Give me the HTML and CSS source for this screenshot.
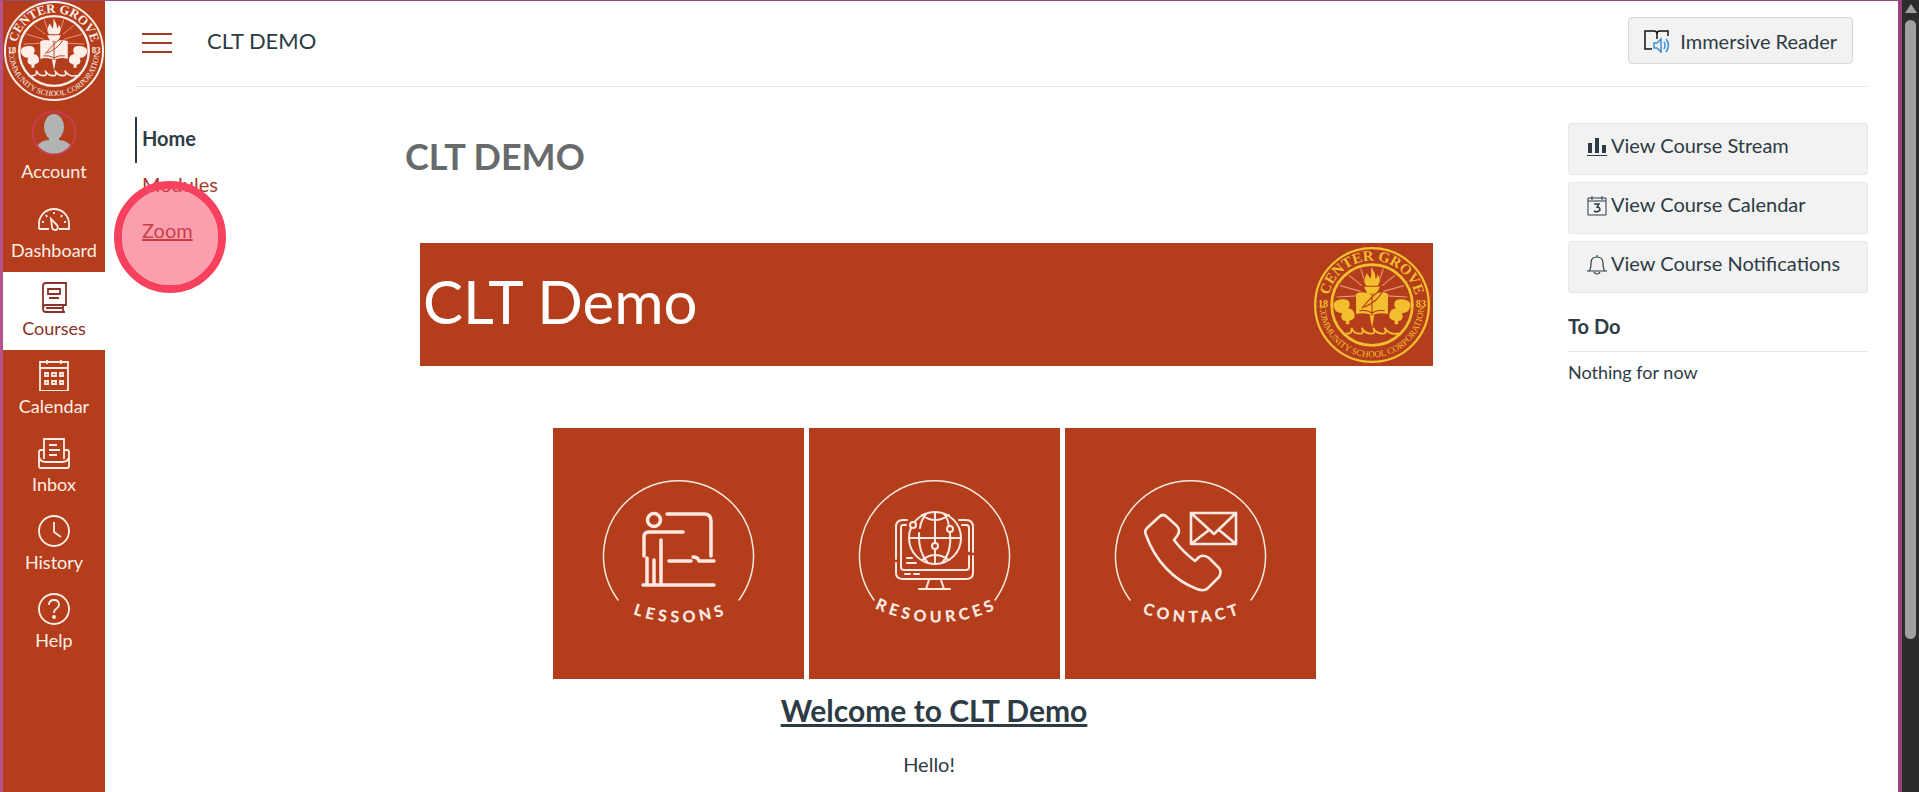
FILE: index.html
```html
<!DOCTYPE html>
<html lang="en">
<head>
    <meta charset="UTF-8">
    <meta name="viewport" content="width=device-width, initial-scale=1.0">
    <title>CLT DEMO</title>
    <link rel="stylesheet" href="styles.css">
</head>
<body>
    <!-- Shared school seal -->
    <svg class="defs" width="0" height="0" aria-hidden="true">
        <symbol id="seal" viewBox="0 0 102 102" overflow="visible">
            <path id="sealTop" d="M12 51 A39 39 0 0 1 90 51" fill="none"/>
            <path id="sealBottom" d="M5 51 A46 46 0 0 0 97 51" fill="none"/>
            <circle cx="51" cy="51" r="50" fill="none" stroke="currentColor" stroke-width="2"/>
            <circle cx="51" cy="51" r="35.5" fill="none" stroke="currentColor" stroke-width="2.4"/>
            <text class="seal-name" text-anchor="middle"><textPath href="#sealTop" startOffset="50%">CENTER GROVE</textPath></text>
            <text class="seal-corp" text-anchor="middle"><textPath href="#sealBottom" startOffset="50%">COMMUNITY SCHOOL CORPORATION</textPath></text>
            <text class="seal-year" x="8" y="53" text-anchor="middle">18</text>
            <text class="seal-year" x="94" y="53" text-anchor="middle">83</text>
            <g class="seal-rays" fill="none">
                <path d="M51 18 V26 M41 19 L44 28 M61 19 L58 28 M31 25 L42 34 M71 25 L60 34 M23 34 L41 39 M79 34 L61 39 M20 44 L38 43 M82 44 L64 43"/>
            </g>
            <path fill="currentColor" d="M46 34 C42 29 46 27 46 23 C48 25 49 26 49 28 C51 26 51 22 50 19 C54 22 54 25 54 28 C55 27 56 26 56 24 C59 29 58 31 56 34 Z"/>
            <path fill="currentColor" d="M44 35 H58 L55 41 H47 Z"/>
            <path fill="currentColor" d="M37 41 Q44 38 51 42 Q58 38 65 41 V59 Q58 57 51 60 Q44 57 37 59 Z"/>
            <path fill="currentColor" d="M49 60 H53 L51 71 Z"/>
            <path class="seal-cut" fill="none" d="M51 42 V60 M40 56 Q46 55 51 58 Q56 55 62 56 M42 54 C46 49 52 42 60 37 C60 43 53 49 44 53"/>
            <g fill="currentColor">
                <path d="M18 54 C15 50 19 46 25 46 C31 45 33 50 30 54 C35 54 37 60 35 63 L31 65 V68 H28 V65 C24 65 23 61 25 58 C22 58 19 57 18 54 Z"/>
                <path d="M84 54 C87 50 83 46 77 46 C71 45 69 50 72 54 C67 54 65 60 67 63 L71 65 V68 H74 V65 C78 65 79 61 77 58 C80 58 83 57 84 54 Z"/>
            </g>
            <path fill="none" stroke="currentColor" stroke-width="1.6" d="M28 76 Q34 77 33 71 Q35 77 42 76 Q44 75 42 71 Q45 77 52 76 Q54 75 52 71 Q55 77 62 76 Q64 75 62 71 Q66 78 75 76"/>
        </symbol>
    </svg>

    <div class="window">
        <div class="app">
            <nav class="global-nav" aria-label="Global navigation">
                <a class="logo" href="#" aria-label="Center Grove"><svg viewBox="0 0 102 102"><use href="#seal"/></svg></a>
                <a class="nav-item account" href="#">
                    <svg class="avatar" viewBox="0 0 46 46">
                        <clipPath id="avatarClip"><circle cx="23" cy="23" r="21"/></clipPath>
                        <g clip-path="url(#avatarClip)" fill="#b2b4b3">
                            <ellipse cx="23" cy="17" rx="10" ry="13"/>
                            <path d="M18 26 H28 V30 C38 31 42 36 42 46 H4 C4 36 8 31 18 30 Z"/>
                        </g>
                        <circle cx="23" cy="23" r="21.5" fill="none" stroke="#cb3b54" stroke-width="2"/>
                    </svg>
                    <span>Account</span>
                </a>
                <a class="nav-item" href="#">
                    <svg viewBox="0 0 32 32"><path d="M1 26 V21 A15 15 0 0 1 31 21 V26 H21 M1 26 H11 M16 9 V11 M8 12 L9 14 M24 12 L23 14 M4 19 H6 M26 19 H28"/><path d="M13 16 L19 22 Q21 26 18 27 Q14 27 14 24 Z"/></svg>
                    <span>Dashboard</span>
                </a>
                <a class="nav-item active" href="#">
                    <svg viewBox="0 0 32 32"><path d="M28 22 V2 H8 Q5 2 5 5 V28 Q5 31 8 31 H27 M5 27 Q5 24 8 24 H28 V22 M8 27 H25 M25 24 V31 M10 8 H22 V13 H10 Z M11 17 H21"/></svg>
                    <span>Courses</span>
                </a>
                <a class="nav-item" href="#">
                    <svg viewBox="0 0 32 32"><path d="M2 3 H30 V32 H2 Z M2 9 H30 M9 1 V5 M23 1 V5 M7 14 H10 V17 H7 Z M14 14 H18 V17 H14 Z M22 14 H25 V17 H22 Z M7 22 H10 V25 H7 Z M14 22 H18 V25 H14 Z M22 22 H25 V25 H22 Z"/></svg>
                    <span>Calendar</span>
                </a>
                <a class="nav-item" href="#">
                    <svg viewBox="0 0 32 32"><path d="M6 22 V2 H26 V22 M6 13 H3 Q1 13 1 15 V29 Q1 31 3 31 H29 Q31 31 31 29 V15 Q31 13 29 13 H26 M1 20 Q2 25 8 25 H24 Q30 25 31 20 M11 8 H19 M11 13 H22 M11 18 H19"/></svg>
                    <span>Inbox</span>
                </a>
                <a class="nav-item" href="#">
                    <svg viewBox="0 0 32 32"><circle cx="16" cy="16" r="15"/><path d="M16 7 V17 L23 22"/></svg>
                    <span>History</span>
                </a>
                <a class="nav-item" href="#">
                    <svg viewBox="0 0 32 32"><circle cx="16" cy="16" r="15"/><path d="M11 12 Q11 7 16 7 Q21 7 21 12 Q21 14 18 16 Q16 17 16 20"/><circle class="dot" cx="16" cy="24" r="1"/></svg>
                    <span>Help</span>
                </a>
            </nav>

            <div class="page">
                <header class="topbar">
                    <button class="menu-toggle" type="button" aria-label="Toggle course menu">
                        <svg viewBox="0 0 30 20"><path d="M0 1 H30 M0 10 H30 M0 19 H30"/></svg>
                    </button>
                    <span class="crumb">CLT DEMO</span>
                    <button class="reader" type="button">
                        <svg viewBox="0 0 26 24">
                            <path d="M8 20 H1 V2 H10 Q13 2 13 5 V10 M13 5 Q13 2 16 2 H24 V7" fill="none" stroke="#111" stroke-width="1.5"/>
                            <path d="M10 14 H13 L17 10 V23 L13 19 H10 Z M20 13 Q22 16 20 20 M22 10 Q27 16 22 23" fill="none" stroke="#3b8fd6" stroke-width="1.5"/>
                        </svg>
                        Immersive Reader
                    </button>
                </header>

                <div class="columns">
                    <nav class="course-nav" aria-label="Course navigation">
                        <a class="current" href="#">Home</a>
                        <a href="#">Modules</a>
                        <a class="hovered" href="#">Zoom</a>
                        <span class="click-marker"></span>
                    </nav>

                    <main class="content">
                        <h1>CLT DEMO</h1>
                        <div class="banner">
                            <span>CLT Demo</span>
                            <svg class="banner-seal" viewBox="0 0 102 102"><use href="#seal"/></svg>
                        </div>

                        <div class="tiles">
                            <a href="#" aria-label="Lessons">
                                <svg viewBox="0 0 251 251">
                                    <path id="labelArc" d="M47 169 A140 140 0 0 0 208 169" fill="none" stroke="none"/>
                                    <path class="ring" d="M65 172 A75 75 0 1 1 186 172"/>
                                    <g class="bold-lines">
                                        <circle cx="101" cy="92" r="6.5"/>
                                        <path d="M114 86 H151 Q158 86 158 93 V128 M91 128 V109 Q91 104 96 104 H130 M94 130 V156 M101 132 V156 M108 112 V156 M90 157 H161 M116 133 H138 M140 129 Q145 129 146 133 H161"/>
                                    </g>
                                    <text class="tile-label"><textPath href="#labelArc" startOffset="50%">LESSONS</textPath></text>
                                </svg>
                            </a>
                            <a href="#" aria-label="Resources">
                                <svg viewBox="0 0 251 251">
                                    <path class="ring" d="M65 172 A75 75 0 1 1 186 172"/>
                                    <g class="thin-lines">
                                        <circle cx="126" cy="110" r="26"/>
                                        <path d="M126 84 V115 M126 121 V136 M100 110 H152 M113 87 Q126 97 140 87 M113 132 Q126 122 140 132 M117 86 Q112 92 111 100 M110 105 Q109 124 119 135 M135 86 Q139 91 140 98 M141 105 Q143 124 133 135"/>
                                        <path d="M98 92 H94 Q87 92 87 99 V131 M150 92 H157 Q164 92 164 99 V124 M87 135 V145 Q87 151 94 151 H157 Q164 151 164 145 V128 M97 97 H94 Q92 97 92 100 V139 Q92 142 95 142 H157 Q160 142 160 139 V128 M153 97 H157 Q160 97 160 100 V123 M120 152 L117 161 M132 152 L135 161 M110 161 H141 M98 130 H103 M98 135 H107 M96 146 H101 M105 146 H110"/>
                                        <g class="node"><circle cx="104" cy="97" r="3"/><circle cx="141" cy="101" r="3"/><circle cx="126" cy="118" r="3"/></g>
                                    </g>
                                    <text class="tile-label"><textPath href="#labelArc" startOffset="50%">RESOURCES</textPath></text>
                                </svg>
                            </a>
                            <a href="#" aria-label="Contact">
                                <svg viewBox="0 0 251 251">
                                    <path class="ring" d="M65 172 A75 75 0 1 1 186 172"/>
                                    <g class="mid-lines">
                                        <path d="M82 100 L94 89 Q98 85 102 89 L112 98 Q116 103 112 108 L109 112 Q118 124 130 133 L134 129 Q139 126 144 130 L154 140 Q157 144 154 149 L143 160 Q139 164 132 161 C108 152 90 132 81 107 Q79 103 82 100 Z"/>
                                        <path d="M126 85 H171 V116 H126 Z M126 85 L149 106 L171 85 M126 116 L144 102 M171 116 L154 102"/>
                                    </g>
                                    <text class="tile-label"><textPath href="#labelArc" startOffset="50%">CONTACT</textPath></text>
                                </svg>
                            </a>
                        </div>

                        <h2>Welcome to CLT Demo</h2>
                        <p>Hello!</p>
                    </main>

                    <aside class="sidebar">
                        <a class="side-btn" href="#">
                            <svg viewBox="0 0 20 20"><path d="M1 6 H5 V16 H1 Z M8 1 H12 V16 H8 Z M15 8 H19 V16 H15 Z M0 18 H20 V19 H0 Z" fill="currentColor"/></svg>
                            View Course Stream
                        </a>
                        <a class="side-btn" href="#">
                            <svg viewBox="0 0 20 20"><path d="M1 2 H19 V19 H1 Z M1 5 H19 M5 0 V4 M15 0 V4" fill="none" stroke="currentColor"/><path d="M7 8 H12 L10 11 Q13 11 13 14 Q11 17 7 15" fill="none" stroke="currentColor" stroke-width="1.4"/></svg>
                            View Course Calendar
                        </a>
                        <a class="side-btn" href="#">
                            <svg viewBox="0 0 20 20"><path d="M0 16 H20 M2 16 Q4 14 4 8 Q4 2 10 2 Q16 2 16 8 Q16 14 18 16 M7 17 Q8 19 10 19 Q12 19 13 17 M10 0 V2" fill="none" stroke="currentColor" stroke-width="1.2"/></svg>
                            View Course Notifications
                        </a>
                        <h3>To Do</h3>
                        <p>Nothing for now</p>
                    </aside>
                </div>
            </div>
        </div>

        <div class="scrollbar" aria-hidden="true">
            <span class="scroll-arrow"></span>
            <span class="scroll-thumb"></span>
        </div>
    </div>
</body>
</html>
```

FILE: styles.css
```css
:root {
    --brand: #b43e1b;
    --link: #a33a2c;
    --ink: #2d3b45;
    --line: #e3e5e6;
}
* {
    box-sizing: border-box;
}
body {
    margin: 0;
    font-family: Lato, "Open Sans", sans-serif;
    font-size: 20px;
    line-height: 24px;
    color: var(--ink);
    background: #fff;
}
a {
    color: inherit;
    text-decoration: none;
}
svg {
    display: block;
}
.defs {
    position: absolute;
}
.window {
    display: flex;
    height: 100vh;
    overflow: hidden;
}
.app {
    flex: 1;
    display: flex;
    border-top: 1px solid #8f4f78;
    border-left: 3px solid #b8528a;
    border-right: 4px solid #97427a;
}

/* Global navigation */
.global-nav {
    width: 102px;
    flex-shrink: 0;
    background: var(--brand);
    color: #fdeee8;
}
.logo svg {
    width: 102px;
    height: 100px;
    overflow: visible;
}
.nav-item {
    display: flex;
    flex-direction: column;
    align-items: center;
    gap: 3px;
    height: 78px;
    padding-top: 9px;
    font-size: 18px;
}
.nav-item svg {
    width: 32px;
    height: 32px;
    fill: none;
    stroke: currentColor;
    stroke-width: 1.8;
}
.nav-item .dot {
    fill: currentColor;
}
.nav-item.account {
    height: 93px;
}
.nav-item .avatar {
    width: 46px;
    height: 46px;
    stroke: none;
}
.nav-item.active {
    background: #fff;
    color: #8c3127;
}

/* School seal */
.seal-name,
.seal-corp,
.seal-year {
    fill: currentColor;
    font-family: "Liberation Serif", serif;
}
.seal-name {
    font-size: 13px;
    font-weight: bold;
}
.seal-corp {
    font-size: 8px;
}
.seal-year {
    font-size: 9px;
    font-weight: bold;
}
.seal-rays {
    stroke: #ef9478;
    stroke-width: 1;
}
.seal-cut {
    stroke: var(--brand);
    stroke-width: 1;
}

/* Page header */
.page {
    flex: 1;
    padding: 0 30px;
}
.topbar {
    display: flex;
    align-items: center;
    height: 86px;
    padding: 0 15px 6px 7px;
    border-bottom: 1px solid var(--line);
}
.menu-toggle {
    margin-top: 4px;
    padding: 0;
    border: 0;
    background: none;
}
.menu-toggle svg {
    width: 30px;
    height: 20px;
    stroke: #a33a26;
    stroke-width: 2;
}
.crumb {
    margin-left: 35px;
    font-size: 22px;
}
.reader {
    display: flex;
    align-items: center;
    gap: 10px;
    height: 47px;
    margin-left: auto;
    padding: 0 15px;
    border: 1px solid #d5d8da;
    border-radius: 4px;
    background: #f2f2f2;
    color: var(--ink);
    font: inherit;
}
.reader svg {
    width: 26px;
    height: 24px;
}

/* Columns */
.columns {
    display: flex;
    padding-top: 30px;
}
.course-nav {
    position: relative;
    width: 196px;
}
.course-nav a {
    display: block;
    padding: 9px 0 13px 7px;
    color: var(--link);
}
.course-nav .current {
    padding-left: 5px;
    border-left: 2px solid var(--ink);
    color: var(--ink);
    font-weight: bold;
}
.course-nav .hovered {
    text-decoration: underline;
}
.click-marker {
    position: absolute;
    top: 64px;
    left: -21px;
    width: 112px;
    height: 112px;
    border: 8px solid #f8405f;
    border-radius: 50%;
    background: rgba(248, 64, 96, 0.5);
    background-clip: padding-box;
}
.content {
    flex: 1;
    padding: 0 105px 0 74px;
    text-align: center;
}
.content h1 {
    margin: 17px 0 65px;
    font-size: 36px;
    line-height: 44px;
    text-align: left;
    color: #686b6b;
}
.banner {
    display: flex;
    align-items: center;
    justify-content: space-between;
    height: 123px;
    margin: 0 30px 62px 15px;
    padding: 0 3px;
    background: var(--brand);
    color: #fff;
    font-size: 60px;
    line-height: 72px;
}
.banner span {
    padding-bottom: 8px;
}
.banner-seal {
    width: 116px;
    height: 116px;
    color: #f3bf2f;
}
.tiles {
    display: flex;
    justify-content: center;
    gap: 5px;
}
.tiles a {
    width: 251px;
    background: var(--brand);
}
.tiles svg {
    fill: none;
    stroke: #fde9e2;
    stroke-linecap: round;
    stroke-linejoin: round;
}
.ring {
    stroke-width: 1.5;
}
.bold-lines {
    stroke-width: 3.5;
}
.mid-lines {
    stroke-width: 2.6;
}
.thin-lines {
    stroke-width: 2;
}
.node {
    fill: var(--brand);
}
.tile-label {
    fill: #fde9e2;
    stroke: none;
    font-size: 16px;
    font-weight: 900;
    letter-spacing: 4px;
    text-anchor: middle;
}
.content h2 {
    margin: 13px 0 24px;
    font-size: 30px;
    line-height: 36px;
    text-decoration: underline;
}
.content p {
    margin: 0 10px 0 0;
}

/* Right sidebar */
.sidebar {
    width: 300px;
    flex-shrink: 0;
    padding-top: 6px;
}
.side-btn {
    display: flex;
    gap: 4px;
    height: 52px;
    margin-bottom: 7px;
    padding: 9px 18px;
    border: 1px solid #e4e6e7;
    border-radius: 3px;
    background: #f2f2f2;
}
.side-btn svg {
    width: 20px;
    height: 20px;
    margin-top: 4px;
}
.sidebar h3 {
    margin: 21px 0 8px;
    padding-bottom: 13px;
    border-bottom: 1px solid var(--line);
    font-size: 20px;
    line-height: 24px;
}
.sidebar p {
    margin: 0;
    font-size: 18px;
}

/* Scrollbar */
.scrollbar {
    width: 17px;
    padding: 4px 3px;
    background: #2c2c2c;
}
.scroll-arrow {
    display: block;
    border: 6px solid transparent;
    border-top: 0;
    border-bottom: 9px solid #a0a0a0;
}
.scroll-thumb {
    display: block;
    width: 11px;
    height: 79%;
    margin-top: 7px;
    border-radius: 6px;
    background: #a0a0a0;
}
```
